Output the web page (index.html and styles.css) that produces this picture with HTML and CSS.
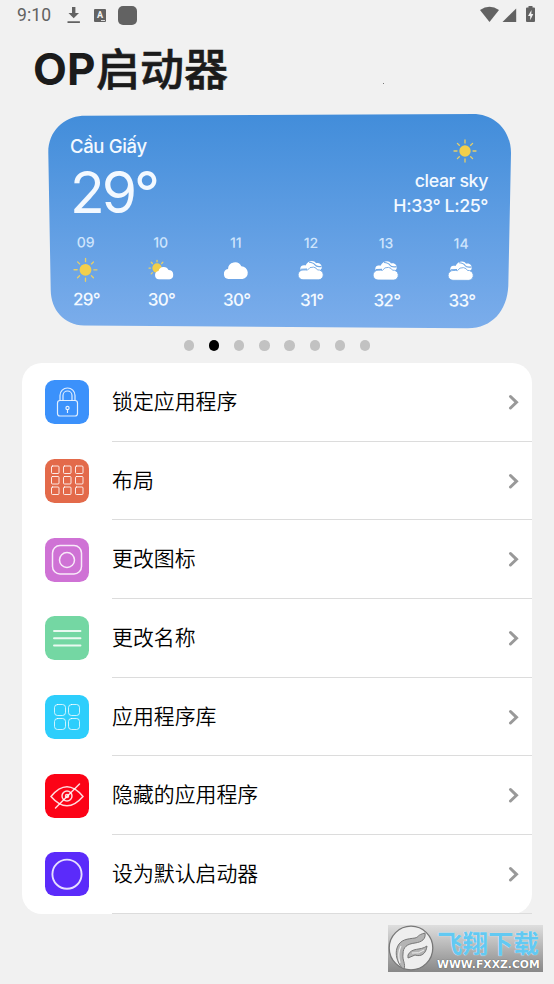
FILE: index.html
```html
<!DOCTYPE html>
<html lang="zh-CN">
<head>
<meta charset="utf-8">
<title>OP启动器</title>
<link rel="stylesheet" href="styles.css">
</head>
<body>
<svg class="defs" width="0" height="0">
  <defs>
    <symbol id="sun" viewBox="0 0 24 24">
      <circle cx="12" cy="12" r="5.7" fill="#f3cf4b"/>
      <path d="M12 1v3M12 20V23M1 12h3M20 12H23M4.400 4.400l1.900 1.900M17.700 17.700l1.900 1.900M4.400 19.600l1.900-1.900M17.700 6.300l1.900-1.900" stroke="#e6ce68" stroke-width="1.300" stroke-linecap="round"/>
    </symbol>
    <symbol id="cloud" viewBox="0 0 26 20">
      <path d="M5.500 19.200A5 5 0 0 1 5 9.300A7 7 0 0 1 18.300 6.500A6.400 6.400 0 0 1 19.500 19.200Z" fill="#fff"/>
    </symbol>
    <symbol id="clouds" viewBox="0 0 26 20">
      <path d="M2.500 9.500C1.500 5.500 5 4.500 7.500 5.300C10 .3 16-.2 18 3C22 2.200 24.500 5 23.500 8.500L20 12H6Z" fill="#fff"/>
      <path d="M11 2.200q4.500.3 6 2.600t6.500 1.400M3 9.200q3-.2 6-.2" fill="none" stroke="#70a8e5" stroke-width="1.100"/>
      <path d="M5 19.700a4.900 4.900 0 0 1 0-9.800q2.500-.1 4.500.1q2-3.500 6-3q3 .6 4 2.800a5 5 0 0 1 1.500 9.900Z" fill="#fff" stroke="#70a8e5" stroke-width=".9"/>
    </symbol>
    <symbol id="partly" viewBox="0 0 26 20">
      <circle cx="9" cy="8.500" r="4.700" fill="#f3cf4b"/>
      <path d="M9 .7v1.500M1 8.500h1.500M3.200 2.700l1.200 1.200M14.800 2.700l-1.200 1.200M3.200 14.300l1.200-1.200" stroke="#e6ce68" stroke-width="1.300" stroke-linecap="round"/>
      <path d="M11 19.800a4.300 4.300 0 0 1-.5-8.500A5.300 5.300 0 0 1 20.500 10.500A4.700 4.700 0 0 1 21.500 19.800Z" fill="#fff"/>
    </symbol>
    <symbol id="chevron" viewBox="0 0 12 16">
      <path d="M2.500 2.500L8.500 8.300l-6 5.700" fill="none" stroke="#999" stroke-width="3" stroke-linecap="round"/>
    </symbol>
  </defs>
</svg>

<header class="status">
  <span class="time">9:10</span>
  <svg class="download" width="14" height="17" viewBox="0 0 14 17"><path d="M5 0h3.400v6H12L6.700 11.300 1.500 6H5ZM.5 14.300h12.400v1.800H.5Z" fill="#626262"/></svg>
  <span class="lang-badge">A<i></i></span>
  <span class="square"></span>
  <svg class="system" width="56" height="18" viewBox="0 0 56 18">
    <g fill="#626262">
      <path d="M0 4Q9.500-2.500 19 4L9.500 16Z"/>
      <path d="M36.200 2.500V16H22.500Z"/>
      <path d="M48.500 0h4v1.600H54q1 0 1 1V15q0 1-1 1h-7q-1 0-1-1V2.600q0-1 1-1h1.500Z"/>
    </g>
    <path d="M51.500 4L48 10h2.200v4.200L53.300 8h-2Z" fill="#f1f1f1"/>
  </svg>
</header>

<h1><span>OP</span>启动器<i class="speck"></i></h1>

<section class="weather">
  <svg class="weather-bg" width="464" height="215" viewBox="0 0 464 215">
    <defs><linearGradient id="sky" x2="0" y2="1"><stop stop-color="#428dda"/><stop offset="1" stop-color="#7badeb"/></linearGradient></defs>
    <path d="M34 1.700L428 0C449 2 463 18 463 39L460.300 172C459 197 444 214 420 214.300L36 211.500C16 211 3 196 2.700 176L.3 39C0 17 16 3 34 1.700Z" fill="url(#sky)"/>
  </svg>
  <div class="now">
    <div class="place">
      <div class="city">Cầu Giấy</div>
      <div class="temp">29°</div>
    </div>
    <div class="sky">
      <svg class="now-icon" width="24" height="24"><use href="#sun"/></svg>
      <div>clear sky</div>
      <div class="range">H:33° L:25°</div>
    </div>
  </div>
  <div class="hours">
    <div class="hour"><span>09</span><svg width="25" height="25"><use href="#sun"/></svg><b>29°</b></div>
    <div class="hour"><span>10</span><svg width="26" height="20"><use href="#partly"/></svg><b>30°</b></div>
    <div class="hour"><span>11</span><svg width="26" height="20"><use href="#cloud"/></svg><b>30°</b></div>
    <div class="hour"><span>12</span><svg width="26" height="20"><use href="#clouds"/></svg><b>31°</b></div>
    <div class="hour"><span>13</span><svg width="26" height="20"><use href="#clouds"/></svg><b>32°</b></div>
    <div class="hour"><span>14</span><svg width="26" height="20"><use href="#clouds"/></svg><b>33°</b></div>
  </div>
</section>

<div class="dots"><i></i><i class="on"></i><i></i><i></i><i></i><i></i><i></i><i></i></div>

<main class="list">
  <div class="row">
    <svg class="icon blue" viewBox="0 0 44 44"><rect x="12.500" y="20.500" width="20" height="15.500" rx="2.500"/><path d="M15 20v-4.500a7.500 7.500 0 0 1 15 0V20M18 20v-4.500a4.500 4.500 0 0 1 9 0V20"/><circle cx="22.500" cy="28" r="1.600"/><path d="M22.500 29.500v3"/></svg>
    <div class="label">锁定应用程序<svg width="12" height="16"><use href="#chevron"/></svg></div>
  </div>
  <div class="row">
    <svg class="icon orange" viewBox="0 0 44 44">
      <rect x="6.500" y="7" width="7.500" height="7.500" rx="1"/><rect x="18.500" y="7" width="7.500" height="7.500" rx="1"/><rect x="30.500" y="7" width="7.500" height="7.500" rx="1"/>
      <rect x="6.500" y="17.500" width="7.500" height="7.500" rx="1"/><rect x="18.500" y="17.500" width="7.500" height="7.500" rx="1"/><rect x="30.500" y="17.500" width="7.500" height="7.500" rx="1"/>
      <rect x="6.500" y="28" width="7.500" height="7.500" rx="1"/><rect x="18.500" y="28" width="7.500" height="7.500" rx="1"/><rect x="30.500" y="28" width="7.500" height="7.500" rx="1"/>
    </svg>
    <div class="label">布局<svg width="12" height="16"><use href="#chevron"/></svg></div>
  </div>
  <div class="row">
    <svg class="icon purple" viewBox="0 0 44 44"><rect x="7.500" y="7.500" width="29" height="28.500" rx="7.500"/><circle cx="22" cy="22" r="7.500"/></svg>
    <div class="label">更改图标<svg width="12" height="16"><use href="#chevron"/></svg></div>
  </div>
  <div class="row">
    <svg class="icon green" viewBox="0 0 44 44"><path d="M9 15h26.500M9 22.300h26.500M9 29.500h26.500"/></svg>
    <div class="label">更改名称<svg width="12" height="16"><use href="#chevron"/></svg></div>
  </div>
  <div class="row">
    <svg class="icon cyan" viewBox="0 0 44 44"><rect x="9.500" y="9.500" width="11" height="11" rx="3"/><rect x="23.500" y="9.500" width="11" height="11" rx="3"/><rect x="9.500" y="23.500" width="11" height="11" rx="3"/><rect x="23.500" y="23.500" width="11" height="11" rx="3"/></svg>
    <div class="label">应用程序库<svg width="12" height="16"><use href="#chevron"/></svg></div>
  </div>
  <div class="row">
    <svg class="icon red" viewBox="0 0 44 44"><path d="M6 22.500Q22 3 38 22.500Q22 41 6 22.500Z"/><circle cx="22" cy="22" r="5"/><circle cx="22" cy="22" r="1.500"/><path d="M34.500 10L10.500 34"/></svg>
    <div class="label">隐藏的应用程序<svg width="12" height="16"><use href="#chevron"/></svg></div>
  </div>
  <div class="row">
    <svg class="icon violet" viewBox="0 0 44 44"><circle cx="22" cy="22.200" r="14.600"/></svg>
    <div class="label">设为默认启动器<svg width="12" height="16"><use href="#chevron"/></svg></div>
  </div>
</main>

<footer class="brand">
  <svg width="46" height="46" viewBox="0 0 46 46">
    <circle cx="23" cy="23" r="21.800" fill="#eee" stroke="#777" stroke-width="1.300"/>
    <path d="M14 43C9 37 7 29 9 23C12 14 20 14 27 13C31 12 29 10 37 8C38 14 34 17 27 18C19 19 15 22 15 29C14 35 18 39 16 44Z" fill="#b4b4b4" stroke="#777" stroke-width="1"/>
    <path d="M12 38Q9 29 13 21" fill="none" stroke="#eee" stroke-width="1.200"/>
    <path d="M20 30C24 22 32 26 39 21C38 29 33 32 27 30L20 33Z" fill="#b4b4b4" stroke="#777" stroke-width="1"/>
    <path d="M24 28Q31 29 36 25" fill="none" stroke="#eee"/>
  </svg>
  <div class="brand-text">
    <div class="brand-name">飞翔下载</div>
    <div class="brand-url">WWW.FXXZ.COM</div>
  </div>
</footer>
</body>
</html>
```
FILE: styles.css
```css
* { box-sizing: border-box; }
body {
  margin: 0;
  width: 554px;
  height: 984px;
  overflow: hidden;
  background: #f1f1f1;
  color: #000;
  font-family: Roboto, "Noto Sans CJK SC", sans-serif;
}
svg { display: block; flex: none; }
.defs { position: absolute; }

.status {
  display: flex;
  align-items: center;
  height: 30px;
  padding: 0 17px;
  color: #626262;
}
.time { width: 50px; font-size: 17.5px; line-height: 31px; letter-spacing: 0.1px; }
.download { margin-top: 1px; }
.lang-badge {
  position: relative;
  width: 12px;
  height: 13px;
  margin-left: 13px;
  background: #626262;
  border-radius: 1px;
  color: #f1f1f1;
  font-size: 9px;
  font-weight: 700;
  line-height: 12px;
  text-align: center;
}
.lang-badge i { position: absolute; right: 1px; bottom: 1px; width: 4px; height: 1px; background: #ddd; }
.square { width: 19px; height: 19px; margin-left: 12px; border-radius: 5px; background: #626262; }
.system { margin-left: auto; margin-right: 1px; }

h1 {
  display: flex;
  height: 84px;
  margin: 0;
  padding-left: 33px;
  color: #1b1b1b;
  font: 500 44px/74px "Noto Sans CJK SC", sans-serif;
  -webkit-text-stroke: 0.6px #1b1b1b;
}
h1 span { width: 63px; font-family: Inter, sans-serif; font-weight: 650; line-height: 78px; -webkit-text-stroke: 0; }
.speck { width: 1px; height: 1px; margin: 53px 0 0 155px; background: #777; }

.weather {
  position: relative;
  width: 464px;
  height: 215px;
  margin-left: 48px;
  color: #f3f9ff;
  font-family: Inter, sans-serif;
}
.weather-bg { position: absolute; inset: 0; z-index: -1; }
.now { display: flex; justify-content: space-between; height: 118px; padding: 20px 24px 0 22px; }
.city { font-size: 18.500px; font-weight: 500; line-height: 24px; letter-spacing: -0.35px; }
.temp { font-size: 57px; font-weight: 400; line-height: 70px; letter-spacing: -3px; }
.sky { font-size: 17.800px; font-weight: 500; line-height: 26px; letter-spacing: -0.4px; text-align: right; padding-top: 5px; }
.now-icon { margin: 0 11px 5px auto; }
.range { line-height: 24px; }
.hours { display: grid; grid-template-columns: repeat(6, 75.100px); transform: rotate(0.2deg); }
.hour { display: grid; grid-template-rows: 20px 36px 24px; justify-items: center; align-items: center; }
.hour span { font-size: 14px; font-weight: 500; color: #cfe5fc; }
.hour b { font-size: 17px; font-weight: 500; letter-spacing: -0.7px; margin-left: 2px; }

.dots { display: flex; justify-content: center; gap: 14.700px; height: 34px; padding-top: 11px; }
.dots i { width: 10.500px; height: 10.500px; border-radius: 50%; background: #c2c2c2; }
.dots .on { background: #000; }

.list { width: 510px; margin-left: 22px; background: #fff; border-radius: 20px; }
.row { display: flex; height: 78.700px; padding-left: 23px; }
.icon {
  width: 44px;
  height: 44px;
  margin-top: 17.300px;
  border-radius: 9.500px;
  fill: none;
  stroke: #fff;
  stroke-opacity: 0.85;
  stroke-width: 1.500;
  stroke-linecap: round;
}
.blue { background: #3b91fb; stroke-width: 1.200; }
.orange { background: #e36a4a; stroke-width: 1; }
.purple { background: #cf72d5; }
.green { background: #74d7a3; stroke-width: 1.900; }
.cyan { background: #2dcefc; stroke-width: 0.900; }
.red { background: #fc0216; }
.violet { background: #5b2bfa; stroke-width: 1.900; }
.label {
  flex: 1;
  display: flex;
  justify-content: space-between;
  margin-left: 23px;
  padding-right: 12px;
  border-bottom: 1px solid #dcdcdc;
  font: 350 20.900px/74px "Noto Sans CJK SC", sans-serif;
}
.label svg { margin-top: 31px; }

.brand {
  display: flex;
  width: 155px;
  height: 47px;
  margin: 11px 0 0 388px;
  background: linear-gradient(#dedede, #888);
}
.brand-text { margin-left: 3px; white-space: nowrap; }
.brand-name {
  height: 34px;
  color: #62c9f2;
  font: 700 25.500px/34px "Noto Sans CJK SC", sans-serif;
  text-shadow: 0 0 1px #fff;
}
.brand-url { color: #fff; font: 700 10.800px/12px "DejaVu Sans", sans-serif; text-shadow: 0 0 1px #333; }
```
